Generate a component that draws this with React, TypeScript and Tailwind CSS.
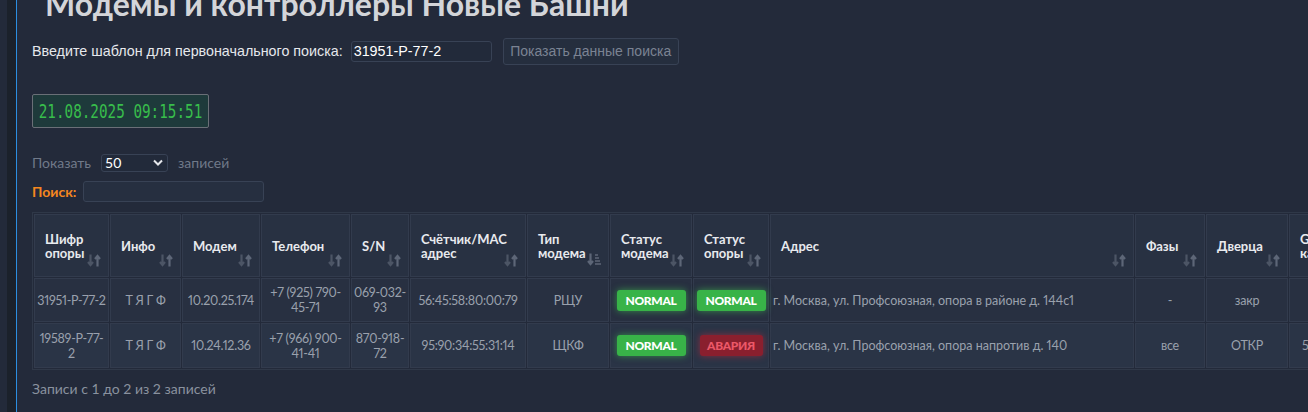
import React from "react";

type Col = { w: number; label: string[]; icon?: "sort" | "sorted" };

const cols: Col[] = [
   { w: 75, label: ["Шифр", "опоры"] },
   { w: 71, label: ["Инфо"] },
   { w: 78, label: ["Модем"] },
   { w: 89, label: ["Телефон"] },
   { w: 58, label: ["S/N"] },
   { w: 116, label: ["Счётчик/MAC", "адрес"] },
   { w: 82, label: ["Тип", "модема"], icon: "sorted" },
   { w: 82, label: ["Статус", "модема"] },
   { w: 76, label: ["Статус", "опоры"] },
   { w: 364, label: ["Адрес"] },
   { w: 70, label: ["Фазы"] },
   { w: 82, label: ["Дверца"] },
   { w: 90, label: ["GSM", "качество"] },
];

type Row = {
   cipher: string;
   info: string;
   modem: string;
   phone: string;
   sn: string;
   mac: string;
   type: string;
   modemOk: boolean;
   poleOk: boolean;
   address: string;
   phases: string;
   door: string;
   gsm: string;
};

const rows: Row[] = [
   {
      cipher: "31951-P-77-2",
      info: "Т Я Г Ф",
      modem: "10.20.25.174",
      phone: "+7 (925) 790-45-71",
      sn: "069-032-93",
      mac: "56:45:58:80:00:79",
      type: "РЩУ",
      modemOk: true,
      poleOk: true,
      address: "г. Москва, ул. Профсоюзная, опора в районе д. 144с1",
      phases: "-",
      door: "закр",
      gsm: "",
   },
   {
      cipher: "19589-P-77-2",
      info: "Т Я Г Ф",
      modem: "10.24.12.36",
      phone: "+7 (966) 900-41-41",
      sn: "870-918-72",
      mac: "95:90:34:55:31:14",
      type: "ЩКФ",
      modemOk: true,
      poleOk: false,
      address: "г. Москва, ул. Профсоюзная, опора напротив д. 140",
      phases: "все",
      door: "ОТКР",
      gsm: "5 - 31",
   },
];

function SortIcon() {
   return (
      <svg width="14" height="13" viewBox="0 0 14 13" className="absolute bottom-[9px] right-[7px]">
         <path d="M3.5 0.5v10M1 8l2.5 3 2.5-3" stroke="#4c5565" strokeWidth="2.2" fill="none" />
         <path d="M10.5 12.5v-10M8 5l2.5-3 2.5 3" stroke="#5d6677" strokeWidth="2.2" fill="none" />
      </svg>
   );
}

function SortedIcon() {
   return (
      <svg width="14" height="13" viewBox="0 0 14 13" className="absolute bottom-[10px] right-[7px]">
         <path d="M3.5 0.5v10M1 8l2.5 3 2.5-3" stroke="#5d6677" strokeWidth="2.2" fill="none" />
         <path d="M8 2h3M8 5h4M8 8h5M8 11h6" stroke="#5d6677" strokeWidth="1.6" fill="none" />
      </svg>
   );
}

function Badge({ ok }: { ok: boolean }) {
   return ok ? (
      <span className="inline-flex h-[21px] w-[69px] items-center justify-center rounded-[3px] bg-[#38b348] text-[12px] font-black tracking-[-0.3px] text-white shadow-[0_0_7px_rgba(64,200,80,0.6)]">
         NORMAL
      </span>
   ) : (
      <span className="inline-flex h-[21px] w-[63px] items-center justify-center rounded-[3px] bg-[#8a1f2e] text-[12px] font-black tracking-[-0.3px] text-[#ec5868] shadow-[0_0_7px_rgba(200,40,60,0.6)]">
         АВАРИЯ
      </span>
   );
}

export default function App() {
   const td = "border border-[#323b4d] px-[2px] text-center align-middle";
   return (
      <div className="flex h-[412px] w-[1308px] overflow-hidden bg-[#232a3a] font-['Lato',_'Inter',_sans-serif]">
         <div className="w-[7px] shrink-0 bg-[#232a3a]"></div>
         <div className="w-[9px] shrink-0 bg-[#1b212b]"></div>
         <div className="min-w-0 flex-1 overflow-hidden border-l border-[#2c8ee0] pl-[15px]">
            {/* Title */}
            <h1 className="-mt-[15px] ml-[13px] whitespace-nowrap text-[32px] font-bold leading-[38px] text-[#d3d5d9]">
               Модемы и контроллеры Новые Башни
            </h1>

            {/* Search template */}
            <div className="mt-[15px] flex h-[27px] items-center font-['Liberation_Sans',_sans-serif] text-[14.3px]">
               <span className="text-[#e6e8ec]">Введите шаблон для первоначального поиска:</span>
               <div className="ml-[8px] flex h-[21px] w-[141px] items-center rounded-[3px] border border-[#384255] bg-[#222a3a] px-[2px] text-white">
                  31951-P-77-2
               </div>
               <button className="ml-[11px] h-[27px] w-[176px] rounded-[3px] border border-[#384255] bg-[#252e3e] text-[14px] text-[#7b8393]">
                  Показать данные поиска
               </button>
            </div>

            {/* Clock */}
            <div className="mt-[29px] flex h-[34px] w-[177px] items-center justify-center rounded-[2px] border border-[#6a6f77] bg-[#1e3a3b]">
               <span className="inline-block scale-y-[1.4] font-['DejaVu_Sans_Mono',_monospace] text-[14.3px] leading-none text-[#38bd4b]">
                  21.08.2025 09:15:51
               </span>
            </div>

            {/* Page length */}
            <div className="mt-[26px] flex h-[17px] items-center text-[14px] text-[#707989]">
               <span>Показать</span>
               <div className="ml-[10px] flex h-[18px] w-[67px] items-center justify-between rounded-[3px] border border-[#384255] bg-[#222a3a] pl-[3px] pr-[4px] text-white">
                  <span>50</span>
                  <svg width="10" height="7" viewBox="0 0 10 7">
                     <path d="M1 1.5l4 4 4-4" stroke="#e5e7eb" strokeWidth="2" fill="none" />
                  </svg>
               </div>
               <span className="ml-[10px]">записей</span>
            </div>

            {/* Search */}
            <div className="mt-[10px] flex h-[21px] items-center text-[14px]">
               <span className="font-bold text-[#f5871f]">Поиск:</span>
               <div className="ml-[7px] h-[21px] w-[181px] rounded-[3px] border border-[#384255] bg-[#262f40]"></div>
            </div>

            {/* Table */}
            <table className="mt-[10px] w-[1157px] table-fixed border-separate border-spacing-[1px] border border-[#2f3848] text-[13px]">
               <thead>
                  <tr className="h-[63px]">
                     {cols.map((c, i) => (
                        <th
                           key={i}
                           style={{ width: c.w }}
                           className="relative border border-[#323b4d] bg-[#283142] pl-[10px] pr-[22px] text-left align-middle font-bold leading-[14px] text-[#e8eaee]"
                        >
                           {c.label.map((l, j) => (
                              <div key={j}>{l}</div>
                           ))}
                           {c.icon === "sorted" ? <SortedIcon /> : <SortIcon />}
                        </th>
                     ))}
                  </tr>
               </thead>
               <tbody className="text-[12.5px] leading-[15px] tracking-[-0.25px] text-[#9aa1ad] proportional-nums">
                  {rows.map((r, i) => (
                     <tr key={i} className={i === 0 ? "h-[44px] bg-[#283041]" : "h-[45px] bg-[#2a3446]"}>
                        <td className={td}>{r.cipher}</td>
                        <td className={td}>{r.info}</td>
                        <td className={td}>{r.modem}</td>
                        <td className={td}>{r.phone}</td>
                        <td className={td}>{r.sn}</td>
                        <td className={td}>{r.mac}</td>
                        <td className={td}>{r.type}</td>
                        <td className={td}>
                           <Badge ok={r.modemOk} />
                        </td>
                        <td className={td}>
                           <Badge ok={r.poleOk} />
                        </td>
                        <td className="border border-[#323b4d] px-[2px] text-left align-middle tracking-normal">{r.address}</td>
                        <td className={td}>{r.phases}</td>
                        <td className={td}>{r.door}</td>
                        <td className="border border-[#323b4d] px-[12px] text-left align-middle">{r.gsm}</td>
                     </tr>
                  ))}
               </tbody>
            </table>

            <div className="mt-[9px] text-[14px] leading-[20px] text-[#8a929f]">Записи с 1 до 2 из 2 записей</div>
         </div>
      </div>
   );
}
